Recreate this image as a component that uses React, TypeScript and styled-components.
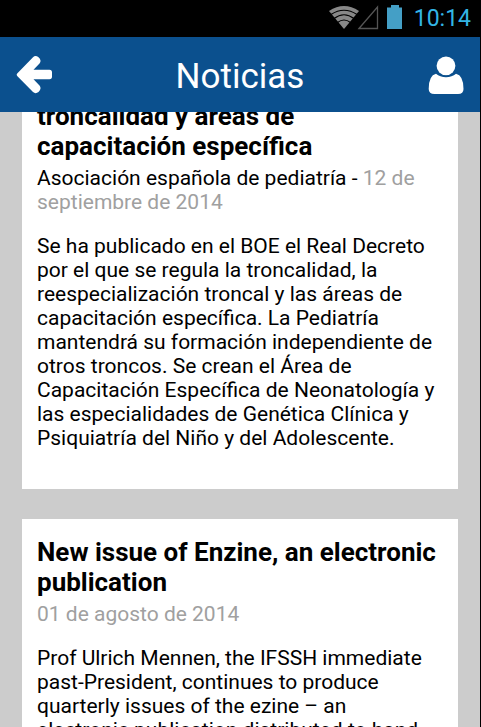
import React from "react";
import styled, { createGlobalStyle } from "styled-components";

const GlobalStyle = createGlobalStyle`
  * { box-sizing: border-box; }
  body { margin: 0; background: #000; font-family: Roboto, sans-serif; }
`;

const Screen = styled.div`
  height: 100vh;
  display: flex;
  flex-direction: column;
  overflow: hidden;
  background: #ccc;
  border-right: 1px solid #000;
`;

const StatusBar = styled.div`
  flex: none;
  height: 37px;
  padding-right: 9px;
  display: flex;
  align-items: center;
  justify-content: flex-end;
  background: #000;
`;

const StatusIcons = styled.svg`
  display: block;
  flex: none;
  margin-right: 10px;
  margin-bottom: 2px;
`;

const Clock = styled.time`
  color: #33b5e5;
  font-size: 23px;
  line-height: 36px;
`;

const Header = styled.header`
  flex: none;
  position: relative;
  z-index: 1;
  height: 75px;
  padding: 0 15px;
  display: flex;
  align-items: center;
  justify-content: space-between;
  background: #0b508e;
  color: #fff;
`;

const PageTitle = styled.h1`
  margin: 0;
  padding-top: 4px;
  font-size: 35px;
  font-weight: 400;
  line-height: 42px;
`;

const IconButton = styled.button`
  display: flex;
  padding: 0;
  border: 0;
  background: none;
  color: inherit;
  cursor: pointer;
`;

const Feed = styled.main`
  flex: 1;
  min-height: 0;
  padding: 0 22px;
`;

const FeedList = styled.div`
  display: flex;
  flex-direction: column;
  gap: 30px;
  margin-top: -29px;
`;

const Card = styled.article`
  padding: 18px 15px 39px;
  background: #fff;
  color: #000;
`;

const CardTitle = styled.h2`
  margin: 0 0 5px;
  font-size: 26px;
  font-weight: 700;
  line-height: 30px;
`;

const Meta = styled.p`
  margin: 0 0 20px;
  font-size: 21px;
  line-height: 24px;
`;

const PostDate = styled.time`
  color: #a0a0a0;
`;

const Summary = styled.p`
  margin: 0;
  font-size: 21px;
  line-height: 24px;
`;

type Article = { title: string; source?: string; date: string; iso: string; text: string };

const articles: Article[] = [
  {
    title: "troncalidad y áreas de capacitación específica",
    source: "Asociación española de pediatría",
    date: "12 de septiembre de 2014",
    iso: "2014-09-12",
    text:
      "Se ha publicado en el BOE el Real Decreto por el que se regula la troncalidad, la reespecialización troncal y las áreas de capacitación específica. La Pediatría mantendrá su formación independiente de otros troncos. Se crean el Área de Capacitación Específica de Neonatología y las especialidades de Genética Clínica y Psiquiatría del Niño y del Adolescente.",
  },
  {
    title: "New issue of Enzine, an electronic publication",
    date: "01 de agosto de 2014",
    iso: "2014-08-01",
    text:
      "Prof Ulrich Mennen, the IFSSH immediate past-President, continues to produce quarterly issues of the ezine – an electronic publication distributed to hand",
  },
];

export default function App() {
  return (
    <>
      <GlobalStyle />
      <Screen>
        <StatusBar>
          <StatusIcons width="75" height="26" viewBox="0 0 75 26" aria-hidden="true">
            <path d="M0 6Q15 -4 30 6L15 24Z" fill="#888" />
            <g fill="none" stroke="#000" strokeWidth="1.2">
              <path d="M2 9.500Q15 1 28 9.500" />
              <path d="M5 13.500Q15 6 25 13.500" />
              <path d="M8.500 17.500Q15 12.500 21.500 17.500" />
            </g>
            <path d="M30 23.500L48.500 2V23.500Z" fill="none" stroke="#555" strokeWidth="1.3" />
            <path d="M62 0H70V2.500H73V24H58V2.500H62Z" fill="#449fc6" />
          </StatusIcons>
          <Clock dateTime="10:14">10:14</Clock>
        </StatusBar>
        <Header>
          <IconButton aria-label="Volver">
            <svg width="38" height="40" viewBox="0 0 38 40" fill="currentColor">
              <path d="M2.200 18.500L18 2.200Q20.500 0 23.500 2.300Q27 5.500 24.500 8.500L18.500 14.800H34.500Q37 14.800 37 17.500V21.500Q37 24.300 34.500 24.300H18.500L24.500 30.500Q27 33.500 23.500 37Q20.500 39.300 18 37L2.200 21Q1 19.700 2.200 18.500Z" />
            </svg>
          </IconButton>
          <PageTitle>Noticias</PageTitle>
          <IconButton aria-label="Perfil">
            <svg width="38" height="40" viewBox="0 0 38 40" fill="currentColor">
              <path d="M9 18.800Q13 22.200 19 22.200Q25 22.200 29 18.800Q36.500 20.500 36.500 34Q36.500 39 31 39H7.500Q1.700 39 1.700 34Q1.700 20.500 9 18.800Z" />
              <circle cx="19" cy="10.800" r="9.400" />
              <path d="M9.500 17.700Q13.500 21 19 21Q24.500 21 28.500 17.700" fill="none" stroke="#0b508e" strokeOpacity="0.6" strokeWidth="1" />
            </svg>
          </IconButton>
        </Header>
        <Feed>
          <FeedList>
            {articles.map((a) => (
              <Card key={a.iso}>
                <CardTitle>{a.title}</CardTitle>
                <Meta>
                  {a.source && `${a.source} - `}
                  <PostDate dateTime={a.iso}>{a.date}</PostDate>
                </Meta>
                <Summary>{a.text}</Summary>
              </Card>
            ))}
          </FeedList>
        </Feed>
      </Screen>
    </>
  );
}
